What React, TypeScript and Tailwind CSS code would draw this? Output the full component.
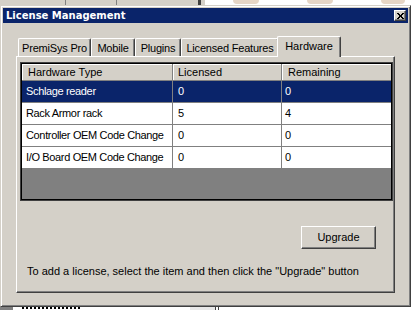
import type { ReactNode } from 'react';

const TABS: ReadonlyArray<{ label: string; width: string }> = [
  { label: 'PremiSys Pro', width: 'w-[73px]' },
  { label: 'Mobile', width: 'w-[44px]' },
  { label: 'Plugins', width: 'w-[46px]' },
  { label: 'Licensed Features', width: 'w-[98px]' },
];

const ROWS: ReadonlyArray<{ type: string; licensed: number; remaining: number }> = [
  { type: 'Schlage reader', licensed: 0, remaining: 0 },
  { type: 'Rack Armor rack', licensed: 5, remaining: 4 },
  { type: 'Controller OEM Code Change', licensed: 0, remaining: 0 },
  { type: 'I/O Board OEM Code Change', licensed: 0, remaining: 0 },
];

function Tab({ label, width }: { label: string; width: string }) {
  return (
    <div
      className={`${width} h-[18px] flex items-center justify-center bg-[#d4d0c8] border-t border-l border-white border-r border-r-[#404040] rounded-tl-[2px] rounded-tr-[2px] shadow-[inset_-1px_0_0_#808080] pt-[1px] tracking-[-0.2px]`}
    >
      {label}
    </div>
  );
}

function HeaderCell({ children, pad, last }: { children: ReactNode; pad: string; last?: boolean }) {
  return (
    <div
      className={`h-[17px] flex items-center ${pad} bg-[#d4d0c8] border-b border-[#808080] ${last ? '' : 'border-r'} shadow-[inset_1px_1px_0_#fff]`}
    >
      {children}
    </div>
  );
}

export default function App() {
  return (
    <div className="w-[411px] h-[310px] overflow-hidden bg-white font-['Liberation_Sans',Arial,sans-serif] text-[11px] leading-[13px] text-black whitespace-nowrap flex flex-col">
      {/* desktop behind the dialog */}
      <div className="h-[5px] flex shrink-0">
        <div className="w-[205px] h-full bg-[#d4d0c8] flex">
          <div className="w-[66px] border-r border-[#808080]" />
          <div className="w-[51px] border-r border-[#808080]" />
          <div className="w-[84px] border-r-[3px] border-[#404040]" />
        </div>
        <div className="flex-1 flex gap-[48px] pl-[28px]">
          <div className="w-[26px] h-[4px] bg-[#e6d6c6] rounded-b-[6px]" />
          <div className="w-[26px] h-[4px] bg-[#e6d6c6] rounded-b-[6px]" />
          <div className="w-[24px] h-[4px] bg-[#e6d6c6] rounded-b-[6px]" />
        </div>
      </div>

      {/* dialog window */}
      <div className="w-[411px] h-[302px] shrink-0 bg-[#d4d0c8] border border-t-[#d4d0c8] border-l-[#d4d0c8] border-r-[#404040] border-b-[#404040] shadow-[inset_1px_1px_0_#fff,inset_-1px_-1px_0_#808080] p-[2px] flex flex-col">
        <div className="h-[15px] bg-[#0a246a] flex items-center justify-between pl-[3px] pr-[2px]">
          <span className="font-['DejaVu_Sans',sans-serif] font-bold text-[10px] text-white leading-none">
            License Management
          </span>
          <div className="w-[12px] h-[11px] bg-[#d4d0c8] border border-t-white border-l-white border-r-[#404040] border-b-[#404040] shadow-[inset_-1px_-1px_0_#808080] flex items-center justify-center">
            <svg width="7" height="6" viewBox="0 0 7 6" shapeRendering="crispEdges">
              <path d="M0 0h2v1h-2zM5 0h2v1h-2zM1 1h2v1h-2zM4 1h2v1h-2zM2 2h3v2h-3zM1 4h2v1h-2zM4 4h2v1h-2zM0 5h2v1h-2zM5 5h2v1h-2z" fill="#000" />
            </svg>
          </div>
        </div>

        <div className="mt-[13px] ml-[13px] w-[379px] flex flex-col">
          {/* tab strip */}
          <div className="h-[20px] flex items-end pl-[2px]">
            {TABS.map((t) => (
              <Tab key={t.label} {...t} />
            ))}
            <div className="relative z-10 -ml-[2px] -mb-[1px] w-[64px] h-[21px] flex items-center justify-center bg-[#d4d0c8] border-t border-l border-white border-r border-r-[#404040] rounded-tl-[2px] rounded-tr-[2px] shadow-[inset_-1px_0_0_#808080] pb-[2px]">
              Hardware
            </div>
          </div>

          {/* tab page */}
          <div className="h-[237px] flex flex-col border border-t-white border-l-white border-r-[#404040] border-b-[#404040] shadow-[inset_-1px_-1px_0_#808080] pt-[5px] pl-[3px] pr-[1px]">
            <div className="h-[139px] border border-[#404040]">
              <div className="h-full border border-black flex flex-col bg-[#808080]">
                <div className="grid grid-cols-[151px_109px_1fr]">
                  <HeaderCell pad="pl-[6px]">Hardware Type</HeaderCell>
                  <HeaderCell pad="pl-[5px]">Licensed</HeaderCell>
                  <HeaderCell pad="pl-[6px]" last>
                    Remaining
                  </HeaderCell>
                </div>
                {ROWS.map((r, i) => {
                  const sel = i === 0;
                  const cell = `h-[22px] flex items-center overflow-hidden border-b border-[#808080] ${sel ? 'bg-[#0a246a] text-white' : 'bg-white'}`;
                  return (
                    <div key={r.type} className="grid grid-cols-[151px_109px_1fr]">
                      <div className={`${cell} border-r pl-[4px] tracking-[-0.35px]`}>{r.type}</div>
                      <div className={`${cell} border-r pl-[5px]`}>{r.licensed}</div>
                      <div className={`${cell} pl-[3px]`}>{r.remaining}</div>
                    </div>
                  );
                })}
              </div>
            </div>

            <div className="mt-[25px] flex justify-end pr-[17px]">
              <button
                type="button"
                className="w-[75px] h-[23px] bg-[#d4d0c8] border border-t-white border-l-white border-r-[#404040] border-b-[#404040] shadow-[inset_-1px_-1px_0_#808080] flex items-center justify-center"
              >
                Upgrade
              </button>
            </div>

            <p className="mt-[16px] pl-[7px]">
              To add a license, select the item and then click the "Upgrade" button
            </p>
          </div>
        </div>
      </div>

      {/* desktop below */}
      <div className="flex-1 flex">
        <div className="w-[13px] bg-[#808080]" />
        <div className="ml-[9px] w-[58px] border-t-2 border-dotted border-black" />
        <div className="ml-[110px] w-[25px] bg-[#e8e8e8]" />
        <div className="w-[4px] border-l border-r border-[#404040]" />
      </div>
    </div>
  );
}
